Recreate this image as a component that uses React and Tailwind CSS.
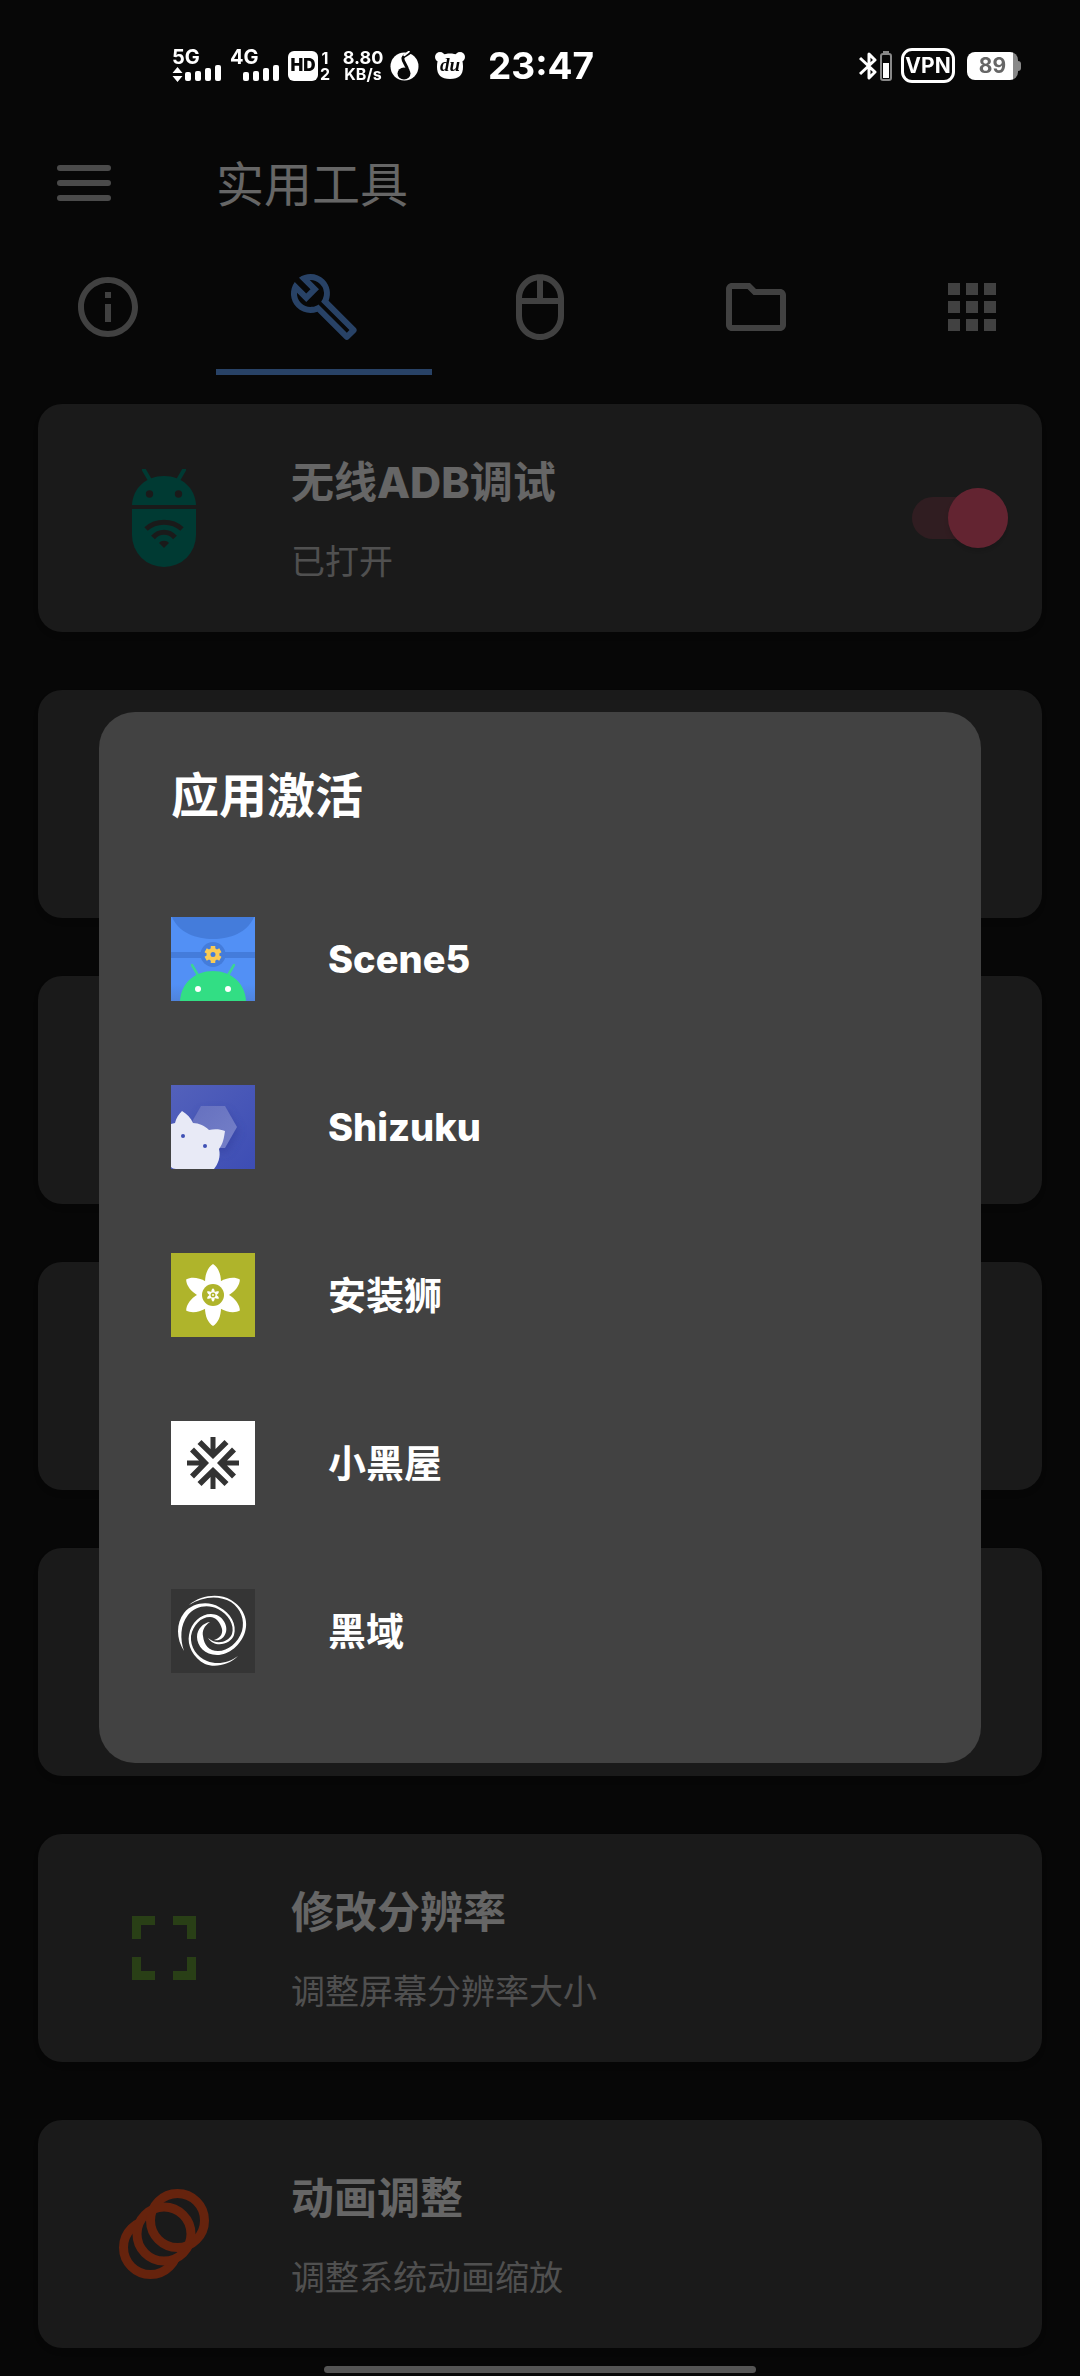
import React, { useState } from "react";
import {
  MdApps,
  MdInfoOutline,
  MdOutlineBuild,
  MdOutlineFolder,
  MdOutlineMouse,
} from "react-icons/md";

const TABS = [
  { id: "info", label: "信息", Icon: MdInfoOutline },
  { id: "tools", label: "工具", Icon: MdOutlineBuild },
  { id: "mouse", label: "鼠标", Icon: MdOutlineMouse },
  { id: "files", label: "文件", Icon: MdOutlineFolder },
  { id: "apps", label: "应用", Icon: MdApps },
];

/* ---------- Status bar ---------- */

function Signal({ label, arrows }) {
  return (
    <div className="flex w-12 flex-col">
      <span className="text-[20px] leading-4 font-bold">{label}</span>
      <svg width="49" height="18" viewBox="0 0 49 18" fill="currentColor">
        {arrows && <path d="M5.500 2l5 6h-10zM5.500 17l5-6h-10z" />}
        <rect x="13" y="7" width="6" height="9" rx="2" />
        <rect x="23" y="6" width="6" height="10" rx="2" />
        <rect x="33" y="3" width="6" height="13" rx="2" />
        <rect x="43" y="0" width="6" height="16" rx="2" />
      </svg>
    </div>
  );
}

function MusicLogo() {
  return (
    <svg width="29" height="30" viewBox="0 0 29 30">
      <circle cx="14.500" cy="15.500" r="14" fill="#fff" />
      <path
        d="M21 0c-1 4-7 3-8 7-1 3 4 7 5 13"
        fill="none"
        stroke="#070707"
        strokeWidth="3"
      />
      <ellipse cx="14" cy="22.500" rx="6.500" ry="6" fill="#070707" />
      <path d="M14 5c1-3 5-3 5-5" stroke="#fff" strokeWidth="2" fill="none" />
    </svg>
  );
}

function BearLogo() {
  return (
    <svg width="30" height="28" viewBox="0 0 30 28">
      <circle cx="5" cy="5" r="5" fill="#fff" />
      <circle cx="25" cy="5" r="5" fill="#fff" />
      <path
        d="M7 3C12 1 18 1 23 3c4 2 5 7 5 12 0 8-4 12-13 12S2 23 2 15C2 10 3 5 7 3z"
        fill="#fff"
      />
      <text
        x="15"
        y="19"
        textAnchor="middle"
        fontSize="19"
        fontWeight="700"
        fontStyle="italic"
        fontFamily="Liberation Serif, serif"
        fill="#070707"
      >
        du
      </text>
    </svg>
  );
}

function StatusBar() {
  return (
    <div className="relative z-20 flex h-[99px] items-center justify-between pt-8 pr-[59px] pl-[172px] text-white">
      <div className="flex items-center">
        <Signal label="5G" arrows />
        <div className="w-[10px]" />
        <Signal label="4G" />
        <span className="ml-[10px] flex h-[30px] w-[30px] items-center justify-center rounded-md bg-white text-[17px] font-black text-[#070707]">
          HD
        </span>
        <span className="ml-[2px] flex w-[10px] flex-col items-center text-[16px] leading-4 font-bold">
          <span>1</span>
          <span>2</span>
        </span>
        <span className="ml-3 flex w-[42px] flex-col items-center leading-4 font-bold">
          <span className="text-[18px] leading-4">8.80</span>
          <span className="text-[16px] leading-4">KB/s</span>
        </span>
        <span className="ml-[6px]">
          <MusicLogo />
        </span>
        <span className="ml-4">
          <BearLogo />
        </span>
        <span className="ml-[23px] text-[37px] leading-none font-bold">23:47</span>
      </div>

      <div className="flex items-center">
        <svg width="19" height="30" viewBox="0 0 19 30" fill="none" stroke="#fff" strokeWidth="3">
          <path d="M1 7l15 14-6 6V3l6 6L1 23" strokeLinejoin="round" />
        </svg>
        <svg className="ml-[2px]" width="12" height="30" viewBox="0 0 12 30">
          <rect x="3" width="6" height="3" fill="#888" />
          <rect x="1" y="3" width="10" height="26" rx="2" fill="none" stroke="#888" strokeWidth="2" />
          <rect x="3" y="12" width="6" height="15" fill="#fff" />
        </svg>
        <span className="ml-[9px] flex h-[35px] w-[54px] items-center justify-center rounded-[11px] border-3 border-white text-[21px] leading-none font-bold">
          VPN
        </span>
        <span className="ml-3 flex h-7 w-[51px] items-center justify-center rounded-lg bg-linear-to-r from-white from-90% to-[#888] to-90% text-[21px] leading-none font-bold text-[#666]">
          89
        </span>
        <span className="h-[10px] w-[3px] rounded-r-sm bg-[#888]" />
      </div>
    </div>
  );
}

/* ---------- Card icons ---------- */

function AdbIcon() {
  return (
    <svg width="64" height="98" viewBox="0 0 64 98" fill="#009180">
      <path d="M12 1l7 12M52 1l-7 12" stroke="#009180" strokeWidth="4" strokeLinecap="round" />
      <path d="M0 36C1 19 14 7 32 7s31 12 32 29z" />
      <path d="M0 40h64v26a32 32 0 0 1-64 0z" />
      <circle cx="17.500" cy="25" r="3.700" fill="#424242" />
      <circle cx="46.500" cy="25" r="3.700" fill="#424242" />
      <g fill="none" stroke="#424242" strokeWidth="5">
        <path d="M14 60c10-9 26-9 36 0" />
        <path d="M21 68.500c6-7 16-7 22 0" />
      </g>
      <path d="M27 74c2-3 8-3 10 0l-5 5z" fill="#424242" />
    </svg>
  );
}

function ResolutionIcon() {
  return (
    <svg width="64" height="64" viewBox="0 0 64 64" fill="none" stroke="#689f38" strokeWidth="9">
      <path d="M23 4.500H4.500V23M41 4.500h18.500V23M4.500 41v18.500H23M59.500 41v18.500H41" />
    </svg>
  );
}

function AnimationIcon() {
  return (
    <svg width="90" height="90" viewBox="0 0 90 90" fill="none" stroke="#ff5722" strokeWidth="9">
      <mask id="behind-middle" maskUnits="userSpaceOnUse" x="0" y="0" width="90" height="90">
        <rect width="90" height="90" fill="#fff" stroke="none" />
        <circle cx="45" cy="45" r="27" fill="#000" stroke="none" />
      </mask>
      <circle cx="31.500" cy="58.500" r="27" mask="url(#behind-middle)" />
      <circle cx="45" cy="45" r="27" />
      <circle cx="58.500" cy="31.500" r="27" />
    </svg>
  );
}

/* ---------- App icons in the dialog ---------- */

function SceneIcon() {
  return (
    <svg width="84" height="84" viewBox="0 0 84 84">
      <defs>
        <linearGradient id="scene-bg" x1="0" y1="0" x2="0" y2="1">
          <stop offset="0.800" stopColor="#5290f5" />
          <stop offset="1" stopColor="#4f83dc" />
        </linearGradient>
      </defs>
      <rect width="84" height="84" fill="url(#scene-bg)" />
      <g fill="#447cdb">
        <path d="M1 0c7 16 24 22 41 22S76 16 83 0z" />
        <rect y="35" width="84" height="6" />
        <circle cx="42" cy="37.500" r="12.500" />
      </g>
      <circle cx="42" cy="37.500" r="4.500" fill="none" stroke="#f9cb55" strokeWidth="4" />
      <g stroke="#f9cb55" strokeWidth="4.500">
        {[0, 60, 120].map((deg) => (
          <path
            key={deg}
            d="M42 29v4M42 42v4"
            transform={`rotate(${deg} 42 37.500)`}
          />
        ))}
      </g>
      <path d="M21 48l7 12M63 48l-7 12" stroke="#3bd594" strokeWidth="2.500" strokeLinecap="round" />
      <path d="M9 84c1-18 15-30 33-30s32 12 33 30z" fill="#32de84" />
      <circle cx="27" cy="72" r="3" fill="#fff" />
      <circle cx="57" cy="72" r="3" fill="#fff" />
    </svg>
  );
}

function ShizukuIcon() {
  return (
    <svg width="84" height="84" viewBox="0 0 84 84">
      <defs>
        <linearGradient id="shizuku-bg" x1="0" y1="0" x2="1" y2="1">
          <stop offset="0" stopColor="#5361bb" />
          <stop offset="1" stopColor="#3d4db4" />
        </linearGradient>
        <linearGradient id="shizuku-hex" x1="0" y1="0" x2="1" y2="1">
          <stop offset="0" stopColor="#6570bf" />
          <stop offset="1" stopColor="#7580c8" />
        </linearGradient>
        <filter id="shizuku-shadow" x="-50%" y="-50%" width="200%" height="200%">
          <feGaussianBlur stdDeviation="4" />
        </filter>
      </defs>
      <rect width="84" height="84" fill="url(#shizuku-bg)" />
      <path
        d="M31 26h25l12 20-12 21H31L19 46z"
        fill="#303f9f"
        opacity="0.600"
        filter="url(#shizuku-shadow)"
      />
      <path d="M30 21h24l12 21-12 21H30L18 42z" fill="url(#shizuku-hex)" />
      <path
        d="M0 39l4-1c1-5 4-9 7-12 5 3 9 7 11 12 6 0 12 3 16 7 5-1 11-1 16 1-1 7-2 13-6 18 2 8-1 15-5 20H5c-2 0-4-1-5-2z"
        fill="#e8eaf6"
      />
      <circle cx="12" cy="51" r="2" fill="#3f51b5" />
      <circle cx="34" cy="61" r="2" fill="#3f51b5" />
    </svg>
  );
}

const PETAL_ANGLES = [0, 60, 120, 180, 240, 300];

function LionIcon() {
  const petals = PETAL_ANGLES.map((deg) => (
    <path
      key={deg}
      d="M0-31C5-28 8-21 8-13L4-6H-4L-8-13C-8-21-5-28 0-31z"
      transform={`rotate(${deg})`}
    />
  ));
  return (
    <svg width="84" height="84" viewBox="0 0 84 84">
      <rect width="84" height="84" fill="#afb42b" />
      <g transform="translate(42 42)" fill="#fff">
        {petals}
        <circle r="11" fill="#afb42b" />
        <g transform="scale(0.220)">{petals}</g>
        <circle r="2.500" fill="#afb42b" />
        <circle r="1" />
      </g>
    </svg>
  );
}

function BlackRoomIcon() {
  return (
    <svg width="84" height="84" viewBox="0 0 84 84">
      <rect width="84" height="84" fill="#fff" />
      <g fill="#333">
        {[0, 90, 180, 270].map((deg) => (
          <path
            key={deg}
            d="M39.500 16h5v12l9-9 4 4L42 38 26.500 23l4-4 9 9z"
            transform={`rotate(${deg} 42 42)`}
          />
        ))}
      </g>
    </svg>
  );
}

function BlackDomainIcon() {
  return (
    <svg width="84" height="84" viewBox="0 0 84 84">
      <rect width="84" height="84" fill="#353535" />
      <g fill="#fff">
        <path d="M18 16C30 6 48 4 60 11C72 18 78 31 74 43C70 56 58 66 46 66C34 66 26 57 26 48C26 40 32 34 39 33C33 37 31 42 32 47C33 56 38 62 47 62C57 62 67 54 71 42C74 31 70 20 60 13C48 6 32 7 18 16z" />
        <path d="M13 62C5 50 5 34 13 24C22 13 38 12 48 18C60 24 66 36 63 46C60 55 44 60 37 49C45 56 57 54 61 45C64 36 57 25 47 20C37 15 24 17 17 26C9 36 9 50 13 62z" />
        <path d="M67 67C58 76 44 79 34 75C22 69 16 56 18 46C20 33 30 25 40 25C51 25 57 36 55 43C53 50 48 52 43 51C49 49 52 45 51 40C49 33 45 28 39 28C30 28 22 36 20 47C19 58 26 68 36 72C46 76 58 74 67 67z" />
      </g>
    </svg>
  );
}

const CARDS = [
  { title: "无线ADB调试", desc: "已打开", Icon: AdbIcon, toggle: true },
  {},
  {},
  {},
  {},
  { title: "修改分辨率", desc: "调整屏幕分辨率大小", Icon: ResolutionIcon },
  { title: "动画调整", desc: "调整系统动画缩放", Icon: AnimationIcon },
];

const APPS = [
  { name: "Scene5", Icon: SceneIcon },
  { name: "Shizuku", Icon: ShizukuIcon },
  { name: "安装狮", Icon: LionIcon },
  { name: "小黑屋", Icon: BlackRoomIcon },
  { name: "黑域", Icon: BlackDomainIcon },
];

// Latin runs are set one step heavier than the Chinese around them
function BoldLabel({ text }) {
  return (
    <span className="font-bold">
      {text.split(/(\w+)/).map((part, i) =>
        i % 2 ? (
          <span key={i} className="font-extrabold">
            {part}
          </span>
        ) : (
          part
        )
      )}
    </span>
  );
}

function ToolCard({ card }) {
  const [on, setOn] = useState(true);
  const { title, desc, Icon, toggle } = card;

  return (
    <div className="flex h-[228px] items-center gap-[73px] rounded-3xl bg-[#424242] pr-[34px] pl-[72px] shadow-md">
      {Icon && (
        <div className="flex w-[108px] shrink-0 justify-center">
          <Icon />
        </div>
      )}
      {title && (
        <div className="flex flex-1 flex-col gap-7 pt-1">
          <h2 className="text-[43px] leading-[56px] text-white">
            <BoldLabel text={title} />
          </h2>
          <p className="text-[34px] leading-[48px] text-[#c8c8c8]">{desc}</p>
        </div>
      )}
      {toggle && (
        <input
          type="checkbox"
          role="switch"
          aria-label={title}
          checked={on}
          onChange={(e) => setOn(e.target.checked)}
          className="relative h-[60px] w-24 appearance-none before:absolute before:inset-x-0 before:top-[9px] before:h-[42px] before:rounded-full before:bg-[#9e9e9e]/30 after:absolute after:top-0 after:left-0 after:size-[60px] after:rounded-full after:bg-[#bdbdbd] after:shadow-md checked:before:bg-[#f85a7b]/30 checked:after:left-9 checked:after:bg-[#f85a7b]"
        />
      )}
    </div>
  );
}

export default function App() {
  const [tab, setTab] = useState("tools");

  return (
    <div className="min-h-screen bg-[#121212] font-['Inter','Noto_Sans_CJK_SC',sans-serif]">
      <StatusBar />

      {/* Toolbar */}
      <header className="flex h-[168px] items-center pl-[57px]">
        <button aria-label="菜单" className="flex w-[54px] flex-col gap-[9px]">
          <span className="h-[6px] rounded-full bg-[#b9b9b9]" />
          <span className="h-[6px] rounded-full bg-[#b9b9b9]" />
          <span className="h-[6px] rounded-full bg-[#b9b9b9]" />
        </button>
        <h1 className="ml-[105px] pt-1 text-[48px] leading-[72px] text-white">实用工具</h1>
      </header>

      {/* Tabs */}
      <nav className="grid h-[108px] grid-cols-5">
        {TABS.map(({ id, label, Icon }) => (
          <button
            key={id}
            aria-label={label}
            onClick={() => setTab(id)}
            className={`flex items-start justify-center border-b-6 pt-1 ${
              tab === id
                ? "border-[#64a5ff] text-[#64a5ff]"
                : "border-transparent text-[#a3a3a3]"
            }`}
          >
            <Icon size={72} />
          </button>
        ))}
      </nav>

      {/* Tool list */}
      <main className="flex flex-col gap-[58px] px-[38px] pt-[29px] pb-7">
        {CARDS.map((card, i) => (
          <ToolCard key={i} card={card} />
        ))}
      </main>

      {/* Dialog */}
      <div className="fixed inset-0 z-10 flex items-center justify-center bg-black/60 px-[99px] pt-[99px]">
        <div
          role="dialog"
          aria-labelledby="dialog-title"
          className="w-full rounded-[36px] bg-[#424242] py-12 text-white"
        >
          <h2 id="dialog-title" className="px-[72px] pt-[2px] pb-[46px] text-[48px] leading-[67px] font-bold">
            应用激活
          </h2>
          <ul>
            {APPS.map(({ name, Icon }) => (
              <li key={name}>
                <button className="flex h-[168px] w-full items-center gap-[73px] px-[72px] text-[38px] leading-[56px]">
                  <Icon />
                  <BoldLabel text={name} />
                </button>
              </li>
            ))}
          </ul>
        </div>
      </div>

      {/* Gesture bar */}
      <div className="fixed inset-x-0 bottom-[3px] z-20 flex justify-center">
        <div className="h-[7px] w-2/5 rounded-full bg-[#555]" />
      </div>
    </div>
  );
}
